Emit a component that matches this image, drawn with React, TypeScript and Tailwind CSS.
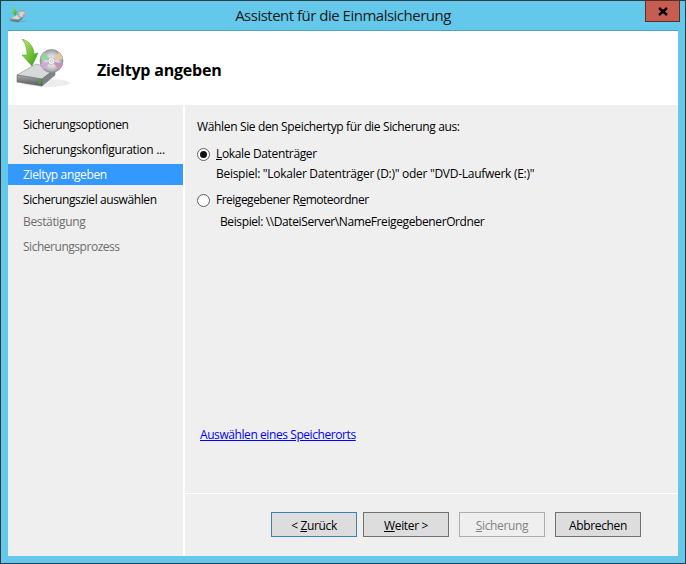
const FONT = "font-['Open_Sans','Noto_Sans',sans-serif]";

function WizardIcon({ width }: { width: number }) {
  return (
    <svg width={width} height={(width * 50) / 56} viewBox="0 0 56 50">
      <defs>
        <radialGradient id="disc" cx="50%" cy="50%" r="50%">
          <stop offset="0" stopColor="#ffffff" />
          <stop offset="0.6" stopColor="#cfcfd2" />
          <stop offset="1" stopColor="#96999d" />
        </radialGradient>
        <linearGradient id="driveFront" x1="0" y1="0" x2="0" y2="1">
          <stop offset="0" stopColor="#a6a9aa" />
          <stop offset="1" stopColor="#55585a" />
        </linearGradient>
        <linearGradient id="arrow" x1="0" y1="0" x2="1" y2="1">
          <stop offset="0" stopColor="#c5ec5f" />
          <stop offset="1" stopColor="#2f9a18" />
        </linearGradient>
      </defs>
      <ellipse cx="30" cy="44" rx="24" ry="4" fill="#000" opacity="0.07" />
      <path d="M1 36 L20 25 L39 30 L26 40 Z" fill="#d6d8d9" stroke="#7d8082" strokeWidth="0.5" />
      <path d="M1 36 L26 40 L26 47 L1 43 Z" fill="url(#driveFront)" stroke="#5c5f61" strokeWidth="0.5" />
      <path d="M26 40 L39 30 L39 36 L26 47 Z" fill="#7f8284" stroke="#5c5f61" strokeWidth="0.5" />
      <rect x="22.5" y="40" width="2" height="5" fill="#3fae25" />
      <circle cx="35.5" cy="22" r="11.5" fill="url(#disc)" stroke="#85888b" strokeWidth="0.6" />
      <path d="M35.5 22 L24.5 20 A11.5 11.5 0 0 1 28 13.5 Z" fill="#8fd6a0" />
      <path d="M35.5 22 L24.5 25 A11.5 11.5 0 0 0 28 30.5 Z" fill="#cfa9d8" />
      <path d="M35.5 22 L46.8 20 A11.5 11.5 0 0 0 43 13.5 Z" fill="#e8c79f" />
      <path d="M35.5 22 L46.8 25 A11.5 11.5 0 0 1 43 30.5 Z" fill="#cc8fb5" />
      <circle cx="35.5" cy="22" r="3.5" fill="#f4f4f5" stroke="#8f9295" strokeWidth="0.5" />
      <circle cx="35.5" cy="22" r="1.3" fill="#fff" stroke="#7d8083" strokeWidth="0.4" />
      <path
        d="M6 0 C13 2 18 8 18 15 L22 14 L16 27 L6 16 L11 16 C11 10 10 5 6 0 Z"
        fill="url(#arrow)"
        stroke="#3b9a1f"
        strokeWidth="0.5"
      />
    </svg>
  );
}

function NavItem({ label, state, fit }: { label: string; state?: 'active' | 'off'; fit?: string }) {
  const tone =
    state === 'active' ? 'bg-[#3399ff] text-white' : state === 'off' ? 'text-[#6d6d6d]' : 'text-black';
  return <div className={`h-[21px] pl-[15px] leading-[21px] whitespace-nowrap ${tone} ${fit ?? ''}`}>{label}</div>;
}

function Radio({ checked }: { checked?: boolean }) {
  return (
    <span className="flex h-[13px] w-[13px] shrink-0 items-center justify-center rounded-full border border-[#5e5e5e] bg-white">
      {checked && <span className="h-[7px] w-[7px] rounded-full bg-[#111]" />}
    </span>
  );
}

function WizButton({ children, variant, className }: { children: React.ReactNode; variant?: 'focus' | 'off'; className?: string }) {
  const tone =
    variant === 'focus'
      ? 'border-[#3c7fb1] bg-[#dddddd] text-black'
      : variant === 'off'
        ? 'border-[#adadad] bg-[#efefef] text-[#838383]'
        : 'border-[#707070] bg-[#dddddd] text-black';
  return (
    <button className={`h-[25px] w-[86px] border pt-[2px] text-center leading-[21px] ${tone} ${className ?? ''}`}>{children}</button>
  );
}

export default function App() {
  return (
    <div className={`${FONT} flex h-[564px] w-[686px] flex-col border border-[#2f3b44] bg-[#64c8ea] text-[12px] tracking-[-0.35px] text-black`}>
      {/* title bar */}
      <div className="relative flex h-[29px] shrink-0 items-center justify-center">
        <div className="absolute left-[9px] top-[6px]">
          <WizardIcon width={18} />
        </div>
        <span className="text-[15px] leading-[29px] tracking-[-0.5px] text-[#1a1a1a]">Assistent für die Einmalsicherung</span>
        <div className="absolute right-[5px] top-[-1px] flex h-[22px] w-[35px] items-center justify-center border border-[#54302c] bg-[#c75c50]">
          <svg width="10" height="9" viewBox="0 0 10 9">
            <path d="M1 1 L9 8 M9 1 L1 8" stroke="#000" strokeWidth="2.4" />
          </svg>
        </div>
      </div>

      {/* client area */}
      <div className="mx-[7px] mb-[7px] flex min-h-0 flex-1 flex-col border-t border-[#4da2bd] bg-white">
        <div className="flex h-[74px] shrink-0 items-center">
          <div className="ml-[8px] mt-[8px] w-[81px] self-start">
            <WizardIcon width={56} />
          </div>
          <h1 className="mt-[4px] text-[16px] font-bold tracking-[-0.2px]">Zieltyp angeben</h1>
        </div>

        <div className="flex min-h-0 flex-1 gap-[2px] bg-white">
          <div className="w-[175px] shrink-0 bg-[#efefef] pt-[9px]">
            <div className="flex flex-col gap-[4px]">
              <NavItem label="Sicherungsoptionen" />
              <NavItem label="Sicherungskonfiguration ..." fit="tracking-[-0.27px]" />
              <NavItem label="Zieltyp angeben" state="active" />
              <NavItem label="Sicherungsziel auswählen" fit="tracking-[-0.39px]" />
            </div>
            <div className="mt-[1px] flex flex-col gap-[4px]">
              <NavItem label="Bestätigung" state="off" />
              <NavItem label="Sicherungsprozess" state="off" fit="tracking-[-0.47px]" />
            </div>
          </div>

          <div className="flex min-w-0 flex-1 flex-col gap-px">
            <div className="flex h-[388px] flex-col bg-[#efefef] pl-[12px] pt-[13px]">
              <div className="leading-[18px]">Wählen Sie den Speichertyp für die Sicherung aus:</div>
              <div className="mt-[9px] flex h-[18px] items-center gap-[6px]">
                <Radio checked />
                <span className="leading-[18px]"><u>L</u>okale Datenträger</span>
              </div>
              <div className="mt-[2px] pl-[19px] leading-[18px] tracking-[-0.28px]">Beispiel: "Lokaler Datenträger (D:)" oder "DVD-Laufwerk (E:)"</div>
              <div className="mt-[8px] flex h-[18px] items-center gap-[6px]">
                <Radio />
                <span className="leading-[18px] tracking-[-0.5px]">Freigegebener R<u>e</u>moteordner</span>
              </div>
              <div className="mt-[4px] pl-[23px] leading-[18px] tracking-[-0.39px]">Beispiel: \\DateiServer\NameFreigegebenerOrdner</div>
              <a className="mt-auto mb-[49px] ml-[3px] leading-[18px] tracking-[-0.42px] text-[#0000ff] underline">Auswählen eines Speicherorts</a>
            </div>
            <div className="flex flex-1 items-start gap-[6px] bg-[#efefef] pl-[86px] pt-[18px]">
              <WizButton variant="focus">&lt; <u>Z</u>urück</WizButton>
              <WizButton><u>W</u>eiter &gt;</WizButton>
              <WizButton variant="off" className="ml-[4px]"><u>S</u>icherung</WizButton>
              <WizButton className="ml-[4px]">Abbrechen</WizButton>
            </div>
          </div>
        </div>
      </div>
    </div>
  );
}
